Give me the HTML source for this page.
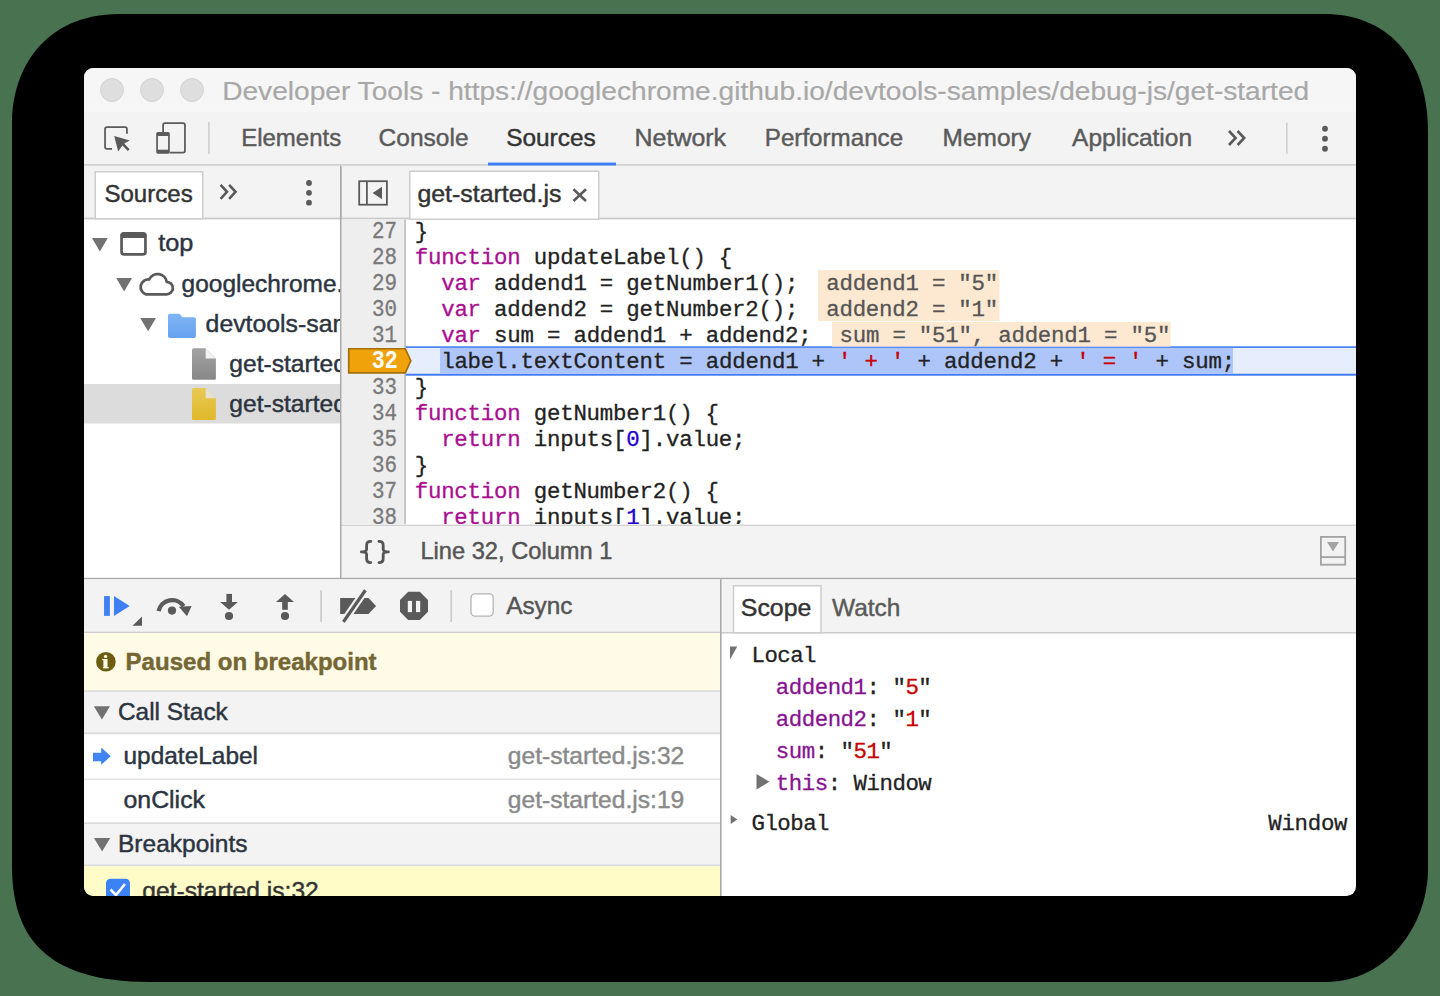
<!DOCTYPE html>
<html><head><meta charset="utf-8"><title>DevTools</title>
<style>html,body{margin:0;padding:0;width:1440px;height:996px;overflow:hidden;background:#497350;}svg{display:block;}text{white-space:pre;}</style>
</head><body>
<svg width="1440" height="996" viewBox="0 0 1440 996">
<rect x="0" y="0" width="1440" height="996" fill="#497350"/>
<path d="M119.5,14.0 H1324.4 C1382.4,14.0 1428.0,52.5 1428.0,132.0 V868.8 C1428.0,926.2 1386.2,982.0 1325.9,982.0 H149.9 C43.5,982.0 12.0,935.1 12.0,865.5 V122.0 C12.0,70.2 43.8,14.0 119.5,14.0 Z" fill="#000"/>
<defs><clipPath id="win"><rect x="84" y="68" width="1272" height="828" rx="9.5" ry="9.5"/></clipPath><clipPath id="nav"><rect x="84" y="219" width="256.5" height="360"/></clipPath><linearGradient id="gf" x1="0" y1="0" x2="0" y2="1"><stop offset="0" stop-color="#a2a2a2"/><stop offset="1" stop-color="#888888"/></linearGradient><linearGradient id="yf" x1="0" y1="0" x2="0" y2="1"><stop offset="0" stop-color="#e8c955"/><stop offset="1" stop-color="#dfb82a"/></linearGradient><linearGradient id="bf" x1="0" y1="0" x2="0" y2="1"><stop offset="0" stop-color="#7fb5f4"/><stop offset="1" stop-color="#65a2ee"/></linearGradient><clipPath id="code"><rect x="341" y="219.5" width="1015" height="304.5"/></clipPath></defs>
<g clip-path="url(#win)">
<rect x="84" y="68" width="1272" height="828" fill="#ffffff" />
<rect x="84" y="68" width="1272" height="43.5" fill="#f6f6f6" />
<circle cx="112" cy="90" r="11.5" fill="#dedede" stroke="#d2d2d2" stroke-width="1"/>
<circle cx="152" cy="90" r="11.5" fill="#dedede" stroke="#d2d2d2" stroke-width="1"/>
<circle cx="192" cy="90" r="11.5" fill="#dedede" stroke="#d2d2d2" stroke-width="1"/>
<text x="222.2" y="100" font-family="Liberation Sans" font-size="26" fill="#a8a8a8" textLength="1087" lengthAdjust="spacingAndGlyphs" stroke="#a8a8a8" stroke-width="0.2">Developer Tools - https://googlechrome.github.io/devtools-samples/debug-js/get-started</text>
<rect x="84" y="111.5" width="1272" height="53" fill="#f3f3f3" />
<rect x="84" y="164.2" width="1272" height="1.6" fill="#c9c9c9" />
<path d="M112,148.9 H107 Q105.05,148.9 105.05,147 V129 Q105.05,127.05 107,127.05 H125 Q126.95,127.05 126.95,129 V133.7" fill="none" stroke="#5a5a5a" stroke-width="1.75"/>
<path d="M114.2,136 L129.8,140.4 L124.2,143.6 L129.6,149.2 L127.8,151 L122.4,145.4 L118.2,151.4 Z" fill="#5a5a5a"/>
<path d="M163.1,132 V125 Q163.1,123.1 165,123.1 H183 Q184.95,123.1 184.95,125 V150.8 Q184.95,152.65 183,152.65 H169.7" fill="none" stroke="#5a5a5a" stroke-width="1.75"/>
<rect x="156.2" y="132" width="13.6" height="21.7" rx="1.6" fill="#5a5a5a"/>
<rect x="157.9" y="136" width="10.2" height="13.7" fill="#f3f3f3" />
<rect x="208.1" y="122" width="1.6" height="32" fill="#cfcfcf" />
<text x="241.2" y="145.8" font-family="Liberation Sans" font-size="24.6" fill="#5a5a5a" stroke="#5a5a5a" stroke-width="0.45" textLength="100" lengthAdjust="spacingAndGlyphs" >Elements</text>
<text x="378.6" y="145.8" font-family="Liberation Sans" font-size="24.6" fill="#5a5a5a" stroke="#5a5a5a" stroke-width="0.45" textLength="90" lengthAdjust="spacingAndGlyphs" >Console</text>
<text x="506.2" y="145.8" font-family="Liberation Sans" font-size="24.6" fill="#333333" stroke="#333333" stroke-width="0.45" textLength="89.5" lengthAdjust="spacingAndGlyphs" >Sources</text>
<text x="634.6" y="145.8" font-family="Liberation Sans" font-size="24.6" fill="#5a5a5a" stroke="#5a5a5a" stroke-width="0.45" textLength="91.5" lengthAdjust="spacingAndGlyphs" >Network</text>
<text x="764.8" y="145.8" font-family="Liberation Sans" font-size="24.6" fill="#5a5a5a" stroke="#5a5a5a" stroke-width="0.45" textLength="138.3" lengthAdjust="spacingAndGlyphs" >Performance</text>
<text x="942.6" y="145.8" font-family="Liberation Sans" font-size="24.6" fill="#5a5a5a" stroke="#5a5a5a" stroke-width="0.45" textLength="88.3" lengthAdjust="spacingAndGlyphs" >Memory</text>
<text x="1072.1" y="145.8" font-family="Liberation Sans" font-size="24.6" fill="#5a5a5a" stroke="#5a5a5a" stroke-width="0.45" textLength="120" lengthAdjust="spacingAndGlyphs" >Application</text>
<rect x="488" y="162.6" width="128" height="3" fill="#3b7df5" />
<path d="M1229,131 L1235.6,138 L1229,145 M1237.6,131 L1244.2,138 L1237.6,145" fill="none" stroke="#5a5a5a" stroke-width="2.6"/>
<rect x="1286" y="122.5" width="1.6" height="31.3" fill="#cfcfcf" />
<circle cx="1325" cy="128.75" r="2.9" fill="#5a5a5a"/>
<circle cx="1325" cy="138.75" r="2.9" fill="#5a5a5a"/>
<circle cx="1325" cy="148.75" r="2.9" fill="#5a5a5a"/>
<rect x="84" y="165.8" width="1272" height="52.4" fill="#f3f3f3" />
<rect x="84" y="217.6" width="1272" height="1.8" fill="#cacaca" />
<rect x="95.25" y="171.75" width="107.5" height="47" fill="#fff" stroke="#cdcdcd" stroke-width="1.5"/>
<text x="104.4" y="201.6" font-family="Liberation Sans" font-size="24.6" fill="#333333" stroke="#333333" stroke-width="0.45" textLength="88.3" lengthAdjust="spacingAndGlyphs" >Sources</text>
<path d="M220.6,184.8 L227,191.8 L220.6,198.8 M229.1,184.8 L235.5,191.8 L229.1,198.8" fill="none" stroke="#5a5a5a" stroke-width="2.6"/>
<circle cx="309" cy="183" r="2.9" fill="#5a5a5a"/>
<circle cx="309" cy="192.8" r="2.9" fill="#5a5a5a"/>
<circle cx="309" cy="202.7" r="2.9" fill="#5a5a5a"/>
<rect x="409.75" y="171.25" width="189" height="48" fill="#fff" stroke="#cdcdcd" stroke-width="1.5"/>
<text x="417.4" y="201.7" font-family="Liberation Sans" font-size="24.6" fill="#333333" stroke="#333333" stroke-width="0.45" textLength="144" lengthAdjust="spacingAndGlyphs" >get-started.js</text>
<path d="M573.5,189.3 L586,201 M586,189.3 L573.5,201" fill="none" stroke="#5a5a5a" stroke-width="2.6"/>
<rect x="359.2" y="181.2" width="27.7" height="23.5" fill="none" stroke="#5a5a5a" stroke-width="1.8"/>
<rect x="366" y="181" width="1.8" height="24" fill="#5a5a5a" />
<path d="M382,186.8 L382,199.3 L372.6,193 Z" fill="#5a5a5a"/>
<g clip-path="url(#nav)">
<rect x="84" y="384" width="257" height="39.5" fill="#dcdcdc" />
<path d="M92,238.1 L107.8,238.1 L99.9,251.4 Z" fill="#727272"/>
<path d="M116.2,278.1 L132.0,278.1 L124.10000000000001,291.40000000000003 Z" fill="#727272"/>
<path d="M140.2,318 L156.0,318 L148.1,331.3 Z" fill="#727272"/>
<rect x="121.55" y="233.35" width="23.9" height="21.1" rx="2.5" fill="none" stroke="#5a5a5a" stroke-width="2.7"/>
<rect x="120.5" y="232.5" width="26" height="5.5" fill="#5a5a5a" rx="2.5"/>
<path d="M146,294.3 H166.5 A6.2,6.2 0 0 0 166.8,281.9 A9.3,9.3 0 0 0 149.2,279.5 A7.6,7.6 0 0 0 146,294.3 Z" fill="none" stroke="#5a5a5a" stroke-width="2.8" stroke-linejoin="round"/>
<path d="M168,315.5 Q168,313.8 169.7,313.8 H179.5 L182.5,317.3 H194.2 Q195.9,317.3 195.9,319 V336.2 Q195.9,337.9 194.2,337.9 H169.7 Q168,337.9 168,336.2 Z" fill="url(#bf)"/>
<path d="M193.5,348.2 H205.6 L215.9,358.4 V378.2 Q215.9,379.7 214.4,379.7 H193.5 Q192,379.7 192,378.2 V349.7 Q192,348.2 193.5,348.2 Z" fill="url(#gf)"/>
<path d="M205.6,348.2 L215.9,358.4 H205.6 Z" fill="#f2f2f2"/>
<path d="M193.5,388 H205.6 L215.9,398.2 V418.4 Q215.9,419.9 214.4,419.9 H193.5 Q192,419.9 192,418.4 V389.5 Q192,388 193.5,388 Z" fill="url(#yf)"/>
<path d="M205.6,388 L215.9,398.2 H205.6 Z" fill="#e4e0d0"/>
<text x="158.2" y="251.4" font-family="Liberation Sans" font-size="24.6" fill="#2b3440" stroke="#2b3440" stroke-width="0.45" textLength="35.2" lengthAdjust="spacingAndGlyphs" >top</text>
<text x="181.6" y="291.6" font-family="Liberation Sans" font-size="24.6" fill="#2b3440" stroke="#2b3440" stroke-width="0.45" textLength="254.2" lengthAdjust="spacingAndGlyphs" >googlechrome.github.io</text>
<text x="205.6" y="331.8" font-family="Liberation Sans" font-size="24.6" fill="#2b3440" stroke="#2b3440" stroke-width="0.45" textLength="193" lengthAdjust="spacingAndGlyphs" >devtools-samples</text>
<text x="229.3" y="371.7" font-family="Liberation Sans" font-size="24.6" fill="#2b3440" stroke="#2b3440" stroke-width="0.45" >get-started.js</text>
<text x="229.3" y="411.5" font-family="Liberation Sans" font-size="24.6" fill="#2b3440" stroke="#2b3440" stroke-width="0.45" >get-started.js</text>
</g>
<rect x="340" y="165.8" width="1.7" height="413" fill="#a9a9a9" />
<g clip-path="url(#code)">
<rect x="341.7" y="219.4" width="62.5" height="306" fill="#eeeeee" />
<rect x="404.2" y="219.4" width="1.7" height="306" fill="#bdbdbd" />
<rect x="405.8" y="346.3" width="950.2" height="29.4" fill="#3e7bf0" />
<rect x="405.8" y="347.9" width="950.2" height="25.85" fill="#e6edfc" />
<rect x="440" y="347.9" width="793" height="25.85" fill="#aec5fa" />
<rect x="818" y="270" width="181.5" height="51" fill="#fde9d2" />
<rect x="832" y="322" width="338.6" height="24.6" fill="#fde9d2" />
<path d="M348.75,348.75 H405.3 L410.8,360.85 L405.3,372.9 H348.75 Z" fill="#f0a20b" stroke="#a46e0b" stroke-width="1.7"/>
<text x="397" y="238.2" font-family="Liberation Mono" font-size="24" fill="#7a7a7a" textLength="25" lengthAdjust="spacingAndGlyphs" text-anchor="end" stroke="#7a7a7a" stroke-width="0.35">27</text>
<text x="414.7" y="238.2" font-family="Liberation Mono" font-size="22.4" xml:space="preserve" textLength="13.233" lengthAdjust="spacing"><tspan fill="#222222" stroke="#222222" stroke-width="0.3">}</tspan></text>
<text x="397" y="264.2" font-family="Liberation Mono" font-size="24" fill="#7a7a7a" textLength="25" lengthAdjust="spacingAndGlyphs" text-anchor="end" stroke="#7a7a7a" stroke-width="0.35">28</text>
<text x="414.7" y="264.2" font-family="Liberation Mono" font-size="22.4" xml:space="preserve" textLength="317.592" lengthAdjust="spacing"><tspan fill="#aa0d91" stroke="#aa0d91" stroke-width="0.3">function</tspan><tspan fill="#222222" stroke="#222222" stroke-width="0.3"> updateLabel() {</tspan></text>
<text x="397" y="290.2" font-family="Liberation Mono" font-size="24" fill="#7a7a7a" textLength="25" lengthAdjust="spacingAndGlyphs" text-anchor="end" stroke="#7a7a7a" stroke-width="0.35">29</text>
<text x="414.7" y="290.2" font-family="Liberation Mono" font-size="22.4" xml:space="preserve" textLength="383.757" lengthAdjust="spacing"><tspan fill="#222222" stroke="#222222" stroke-width="0.3">  </tspan><tspan fill="#aa0d91" stroke="#aa0d91" stroke-width="0.3">var</tspan><tspan fill="#222222" stroke="#222222" stroke-width="0.3"> addend1 = getNumber1();</tspan></text>
<text x="397" y="316.2" font-family="Liberation Mono" font-size="24" fill="#7a7a7a" textLength="25" lengthAdjust="spacingAndGlyphs" text-anchor="end" stroke="#7a7a7a" stroke-width="0.35">30</text>
<text x="414.7" y="316.2" font-family="Liberation Mono" font-size="22.4" xml:space="preserve" textLength="383.757" lengthAdjust="spacing"><tspan fill="#222222" stroke="#222222" stroke-width="0.3">  </tspan><tspan fill="#aa0d91" stroke="#aa0d91" stroke-width="0.3">var</tspan><tspan fill="#222222" stroke="#222222" stroke-width="0.3"> addend2 = getNumber2();</tspan></text>
<text x="397" y="342.2" font-family="Liberation Mono" font-size="24" fill="#7a7a7a" textLength="25" lengthAdjust="spacingAndGlyphs" text-anchor="end" stroke="#7a7a7a" stroke-width="0.35">31</text>
<text x="414.7" y="342.2" font-family="Liberation Mono" font-size="22.4" xml:space="preserve" textLength="396.99" lengthAdjust="spacing"><tspan fill="#222222" stroke="#222222" stroke-width="0.3">  </tspan><tspan fill="#aa0d91" stroke="#aa0d91" stroke-width="0.3">var</tspan><tspan fill="#222222" stroke="#222222" stroke-width="0.3"> sum = addend1 + addend2;</tspan></text>
<text x="397.8" y="367.59999999999997" font-family="Liberation Mono" font-size="25" fill="#ffffff" font-weight="bold" textLength="26" lengthAdjust="spacingAndGlyphs" text-anchor="end" >32</text>
<text x="414.7" y="368.2" font-family="Liberation Mono" font-size="22.4" xml:space="preserve" textLength="820.446" lengthAdjust="spacing"><tspan fill="#222222" stroke="#222222" stroke-width="0.3">  label.textContent = addend1 + </tspan><tspan fill="#c80000" stroke="#c80000" stroke-width="0.3">&#x27; + &#x27;</tspan><tspan fill="#222222" stroke="#222222" stroke-width="0.3"> + addend2 + </tspan><tspan fill="#c80000" stroke="#c80000" stroke-width="0.3">&#x27; = &#x27;</tspan><tspan fill="#222222" stroke="#222222" stroke-width="0.3"> + sum;</tspan></text>
<text x="397" y="394.2" font-family="Liberation Mono" font-size="24" fill="#7a7a7a" textLength="25" lengthAdjust="spacingAndGlyphs" text-anchor="end" stroke="#7a7a7a" stroke-width="0.35">33</text>
<text x="414.7" y="394.2" font-family="Liberation Mono" font-size="22.4" xml:space="preserve" textLength="13.233" lengthAdjust="spacing"><tspan fill="#222222" stroke="#222222" stroke-width="0.3">}</tspan></text>
<text x="397" y="420.2" font-family="Liberation Mono" font-size="24" fill="#7a7a7a" textLength="25" lengthAdjust="spacingAndGlyphs" text-anchor="end" stroke="#7a7a7a" stroke-width="0.35">34</text>
<text x="414.7" y="420.2" font-family="Liberation Mono" font-size="22.4" xml:space="preserve" textLength="304.35900000000004" lengthAdjust="spacing"><tspan fill="#aa0d91" stroke="#aa0d91" stroke-width="0.3">function</tspan><tspan fill="#222222" stroke="#222222" stroke-width="0.3"> getNumber1() {</tspan></text>
<text x="397" y="446.2" font-family="Liberation Mono" font-size="24" fill="#7a7a7a" textLength="25" lengthAdjust="spacingAndGlyphs" text-anchor="end" stroke="#7a7a7a" stroke-width="0.35">35</text>
<text x="414.7" y="446.2" font-family="Liberation Mono" font-size="22.4" xml:space="preserve" textLength="330.825" lengthAdjust="spacing"><tspan fill="#222222" stroke="#222222" stroke-width="0.3">  </tspan><tspan fill="#aa0d91" stroke="#aa0d91" stroke-width="0.3">return</tspan><tspan fill="#222222" stroke="#222222" stroke-width="0.3"> inputs[</tspan><tspan fill="#1c00cf" stroke="#1c00cf" stroke-width="0.3">0</tspan><tspan fill="#222222" stroke="#222222" stroke-width="0.3">].value;</tspan></text>
<text x="397" y="472.2" font-family="Liberation Mono" font-size="24" fill="#7a7a7a" textLength="25" lengthAdjust="spacingAndGlyphs" text-anchor="end" stroke="#7a7a7a" stroke-width="0.35">36</text>
<text x="414.7" y="472.2" font-family="Liberation Mono" font-size="22.4" xml:space="preserve" textLength="13.233" lengthAdjust="spacing"><tspan fill="#222222" stroke="#222222" stroke-width="0.3">}</tspan></text>
<text x="397" y="498.2" font-family="Liberation Mono" font-size="24" fill="#7a7a7a" textLength="25" lengthAdjust="spacingAndGlyphs" text-anchor="end" stroke="#7a7a7a" stroke-width="0.35">37</text>
<text x="414.7" y="498.2" font-family="Liberation Mono" font-size="22.4" xml:space="preserve" textLength="304.35900000000004" lengthAdjust="spacing"><tspan fill="#aa0d91" stroke="#aa0d91" stroke-width="0.3">function</tspan><tspan fill="#222222" stroke="#222222" stroke-width="0.3"> getNumber2() {</tspan></text>
<text x="397" y="524.2" font-family="Liberation Mono" font-size="24" fill="#7a7a7a" textLength="25" lengthAdjust="spacingAndGlyphs" text-anchor="end" stroke="#7a7a7a" stroke-width="0.35">38</text>
<text x="414.7" y="524.2" font-family="Liberation Mono" font-size="22.4" xml:space="preserve" textLength="330.825" lengthAdjust="spacing"><tspan fill="#222222" stroke="#222222" stroke-width="0.3">  </tspan><tspan fill="#aa0d91" stroke="#aa0d91" stroke-width="0.3">return</tspan><tspan fill="#222222" stroke="#222222" stroke-width="0.3"> inputs[</tspan><tspan fill="#1c00cf" stroke="#1c00cf" stroke-width="0.3">1</tspan><tspan fill="#222222" stroke="#222222" stroke-width="0.3">].value;</tspan></text>
<text x="826.2" y="290.2" font-family="Liberation Mono" font-size="22.4" xml:space="preserve"  textLength="172.03" lengthAdjust="spacing"><tspan fill="#555555" stroke="#555555" stroke-width="0.3">addend1 = &quot;5&quot;</tspan></text>
<text x="826.2" y="316.2" font-family="Liberation Mono" font-size="22.4" xml:space="preserve"  textLength="172.03" lengthAdjust="spacing"><tspan fill="#555555" stroke="#555555" stroke-width="0.3">addend2 = &quot;1&quot;</tspan></text>
<text x="839.5" y="342.2" font-family="Liberation Mono" font-size="22.4" xml:space="preserve"  textLength="330.82" lengthAdjust="spacing"><tspan fill="#555555" stroke="#555555" stroke-width="0.3">sum = &quot;51&quot;, addend1 = &quot;5&quot;</tspan></text>
</g>
<rect x="341.7" y="524.6" width="1014.3" height="1.4" fill="#d2d2d2" />
<rect x="341.7" y="526" width="1014.3" height="52" fill="#f3f3f3" />
<path d="M370.8,541.4 Q366.6,541.4 366.6,545.2 V549.2 Q366.6,551.9 361.4,551.9 Q366.6,551.9 366.6,554.6 V558.8 Q366.6,562.6 370.8,562.6 M379,541.4 Q383.2,541.4 383.2,545.2 V549.2 Q383.2,551.9 388.4,551.9 Q383.2,551.9 383.2,554.6 V558.8 Q383.2,562.6 379,562.6" fill="none" stroke="#555555" stroke-width="2.8" stroke-linecap="round" stroke-linejoin="round"/>
<text x="420.4" y="559.3" font-family="Liberation Sans" font-size="23.2" fill="#555555" stroke="#555555" stroke-width="0.45" textLength="192" lengthAdjust="spacingAndGlyphs" >Line 32, Column 1</text>
<rect x="1320.9" y="536.9" width="24.3" height="27.8" fill="none" stroke="#a3a3a3" stroke-width="1.8"/>
<rect x="1320.9" y="556.2" width="24.3" height="1.8" fill="#a3a3a3" />
<path d="M1327,542 H1339 L1333,551.4 Z" fill="#a3a3a3"/>
<rect x="84" y="577.8" width="1272" height="1.5" fill="#a9a9a9" />
<rect x="84" y="579.3" width="636" height="52.4" fill="#f3f3f3" />
<rect x="84" y="631.6" width="636" height="1.5" fill="#d0d0d0" />
<rect x="104.06" y="596.06" width="5.8" height="19.84" fill="#3f81f4" />
<path d="M114,596 L129.7,606 L114,615.9 Z" fill="#3f81f4"/>
<path d="M132.5,625.8 L142,616.4 L142,625.8 Z" fill="#5a5a5a"/>
<path d="M158.6,611.2 A13.8,13.8 0 0 1 183.6,606.2" fill="none" stroke="#5a5a5a" stroke-width="4.3"/>
<path d="M178.8,606.8 L191.6,606 L187,616.2 Z" fill="#5a5a5a"/>
<circle cx="172" cy="610.6" r="4.1" fill="#5a5a5a"/>
<rect x="226.4" y="593.9" width="5.6" height="9" fill="#5a5a5a" />
<path d="M220.2,601.9 H237.9 L229,609.8 Z" fill="#5a5a5a"/>
<circle cx="229" cy="616" r="4.1" fill="#5a5a5a"/>
<rect x="282.2" y="601" width="5.6" height="8.8" fill="#5a5a5a" />
<path d="M276,601.9 H294 L285,593.9 Z" fill="#5a5a5a"/>
<circle cx="285" cy="616" r="4.1" fill="#5a5a5a"/>
<rect x="320.2" y="590.2" width="1.8" height="31.7" fill="#cdcdcd" />
<path d="M340.1,598.1 H368.5 L376.1,605.9 L368.5,614.1 H340.1 Z" fill="#5a5a5a"/>
<path d="M365.4,590.2 L343.4,621.9" stroke="#f3f3f3" stroke-width="7.5"/>
<path d="M365.4,590.2 L343.4,621.9" stroke="#5a5a5a" stroke-width="3.3"/>
<path d="M408.2,591.7 H419.8 L428,599.9 V611.7 L419.8,619.9 H408.2 L400,611.7 V599.9 Z" fill="#5a5a5a"/>
<rect x="407.8" y="600.9" width="4.2" height="11.2" fill="#f3f3f3" />
<rect x="416" y="600.9" width="4.2" height="11.2" fill="#f3f3f3" />
<rect x="450.3" y="590.2" width="1.8" height="31.7" fill="#cdcdcd" />
<rect x="471" y="593.9" width="22.2" height="22.2" rx="4" fill="#fff" stroke="#b5b5b5" stroke-width="1.3"/>
<text x="506.2" y="613.7" font-family="Liberation Sans" font-size="24.6" fill="#555555" stroke="#555555" stroke-width="0.45" textLength="66.3" lengthAdjust="spacingAndGlyphs" >Async</text>
<rect x="84" y="633.1" width="636" height="57.3" fill="#fffbe6" />
<rect x="84" y="690.3" width="636" height="1.6" fill="#d8d8d8" />
<circle cx="105.9" cy="661.8" r="9.8" fill="#6d5d12"/>
<circle cx="105.6" cy="656.4" r="1.7" fill="#fffbe6"/>
<rect x="103.4" y="659" width="4.1" height="9.2" fill="#fffbe6" />
<rect x="102.9" y="667" width="5.9" height="1.3" fill="#fffbe6" />
<rect x="102.2" y="659" width="1.6" height="1.2" fill="#fffbe6" />
<text x="125.6" y="669.8" font-family="Liberation Sans" font-size="24.6" fill="#746735" stroke="#746735" stroke-width="0.45" font-weight="bold" textLength="251" lengthAdjust="spacingAndGlyphs" >Paused on breakpoint</text>
<rect x="84" y="691.9" width="636" height="40.5" fill="#f3f3f3" />
<rect x="84" y="732.3" width="636" height="2" fill="#dcdcdc" />
<path d="M93.8,706.2 L110.0,706.2 L101.89999999999999,719.5 Z" fill="#727272"/>
<text x="118" y="720" font-family="Liberation Sans" font-size="24.6" fill="#2b3440" stroke="#2b3440" stroke-width="0.45" textLength="109.8" lengthAdjust="spacingAndGlyphs" >Call Stack</text>
<rect x="84" y="778.5" width="636" height="1.5" fill="#e4e4e4" />
<path d="M93,752.8 H101.2 V747.5 L110.8,756.2 L101.2,764.8 V761.2 H93 Z" fill="#3f85f5"/>
<text x="123.5" y="764" font-family="Liberation Sans" font-size="24.6" fill="#2b3440" stroke="#2b3440" stroke-width="0.45" textLength="134.5" lengthAdjust="spacingAndGlyphs" >updateLabel</text>
<text x="507.8" y="764" font-family="Liberation Sans" font-size="24.6" fill="#8a8a8a" stroke="#8a8a8a" stroke-width="0.45" textLength="176.5" lengthAdjust="spacingAndGlyphs" >get-started.js:32</text>
<text x="123.5" y="807.5" font-family="Liberation Sans" font-size="24.6" fill="#2b3440" stroke="#2b3440" stroke-width="0.45" textLength="81.5" lengthAdjust="spacingAndGlyphs" >onClick</text>
<text x="507.8" y="807.5" font-family="Liberation Sans" font-size="24.6" fill="#8a8a8a" stroke="#8a8a8a" stroke-width="0.45" textLength="176.5" lengthAdjust="spacingAndGlyphs" >get-started.js:19</text>
<rect x="84" y="822.4" width="636" height="1.8" fill="#dadada" />
<rect x="84" y="824.2" width="636" height="40.4" fill="#f3f3f3" />
<rect x="84" y="864.4" width="636" height="2" fill="#dcdcdc" />
<path d="M94,838 L110.2,838 L102.1,851.6 Z" fill="#727272"/>
<text x="118" y="851.6" font-family="Liberation Sans" font-size="24.6" fill="#2b3440" stroke="#2b3440" stroke-width="0.45" textLength="129.5" lengthAdjust="spacingAndGlyphs" >Breakpoints</text>
<rect x="84" y="866.4" width="636" height="30" fill="#fffcc8" />
<rect x="106" y="878.7" width="24" height="24" rx="4.5" fill="#3b82f5"/>
<path d="M110.5,889.5 L116,895 L125,884" fill="none" stroke="#fff" stroke-width="2.6"/>
<text x="142.3" y="898.5" font-family="Liberation Sans" font-size="24.6" fill="#333333" stroke="#333333" stroke-width="0.45" textLength="176.5" lengthAdjust="spacingAndGlyphs" >get-started.js:32</text>
<rect x="721.6" y="579.3" width="634.4" height="53" fill="#f3f3f3" />
<rect x="721.6" y="632" width="634.4" height="1.5" fill="#cbcbcb" />
<rect x="733.5" y="585.75" width="87.5" height="47" fill="#fff" stroke="#cdcdcd" stroke-width="1.5"/>
<text x="740.8" y="615.6" font-family="Liberation Sans" font-size="24.6" fill="#333333" stroke="#333333" stroke-width="0.45" textLength="70.5" lengthAdjust="spacingAndGlyphs" >Scope</text>
<text x="832" y="615.6" font-family="Liberation Sans" font-size="24.6" fill="#5a5a5a" stroke="#5a5a5a" stroke-width="0.45" textLength="68.3" lengthAdjust="spacingAndGlyphs" >Watch</text>
<rect x="720" y="579.3" width="1.6" height="317" fill="#a9a9a9" />
<path d="M730,646.5 H737.3 L730,659.4 Z" fill="#727272"/>
<text x="751.5" y="662.3" font-family="Liberation Mono" font-size="22.4" xml:space="preserve"  textLength="65.00" lengthAdjust="spacing"><tspan fill="#222222" stroke="#222222" stroke-width="0.3">Local</tspan></text>
<text x="775.8" y="693.8" font-family="Liberation Mono" font-size="22.4" xml:space="preserve"  textLength="156.00" lengthAdjust="spacing"><tspan fill="#881391" stroke="#881391" stroke-width="0.3">addend1</tspan><tspan fill="#222222" stroke="#222222" stroke-width="0.3">: &quot;</tspan><tspan fill="#c80000" stroke="#c80000" stroke-width="0.3">5</tspan><tspan fill="#222222" stroke="#222222" stroke-width="0.3">&quot;</tspan></text>
<text x="775.8" y="725.8" font-family="Liberation Mono" font-size="22.4" xml:space="preserve"  textLength="156.00" lengthAdjust="spacing"><tspan fill="#881391" stroke="#881391" stroke-width="0.3">addend2</tspan><tspan fill="#222222" stroke="#222222" stroke-width="0.3">: &quot;</tspan><tspan fill="#c80000" stroke="#c80000" stroke-width="0.3">1</tspan><tspan fill="#222222" stroke="#222222" stroke-width="0.3">&quot;</tspan></text>
<text x="775.8" y="757.8" font-family="Liberation Mono" font-size="22.4" xml:space="preserve"  textLength="117.00" lengthAdjust="spacing"><tspan fill="#881391" stroke="#881391" stroke-width="0.3">sum</tspan><tspan fill="#222222" stroke="#222222" stroke-width="0.3">: &quot;</tspan><tspan fill="#c80000" stroke="#c80000" stroke-width="0.3">51</tspan><tspan fill="#222222" stroke="#222222" stroke-width="0.3">&quot;</tspan></text>
<path d="M756.5,774 L769.4,781.8 L756.5,789.6 Z" fill="#727272"/>
<text x="775.8" y="789.8" font-family="Liberation Mono" font-size="22.4" xml:space="preserve"  textLength="156.00" lengthAdjust="spacing"><tspan fill="#881391" stroke="#881391" stroke-width="0.3">this</tspan><tspan fill="#222222" stroke="#222222" stroke-width="0.3">: Window</tspan></text>
<path d="M730.7,815 L737.3,819.5 L730.7,824 Z" fill="#727272"/>
<text x="751.5" y="830.2" font-family="Liberation Mono" font-size="22.4" xml:space="preserve"  textLength="78.00" lengthAdjust="spacing"><tspan fill="#222222" stroke="#222222" stroke-width="0.3">Global</tspan></text>
<text x="1268.3" y="830.2" font-family="Liberation Mono" font-size="22.4" xml:space="preserve"  textLength="79.20" lengthAdjust="spacing"><tspan fill="#222222" stroke="#222222" stroke-width="0.3">Window</tspan></text>
</g>
</svg>
</body></html>
